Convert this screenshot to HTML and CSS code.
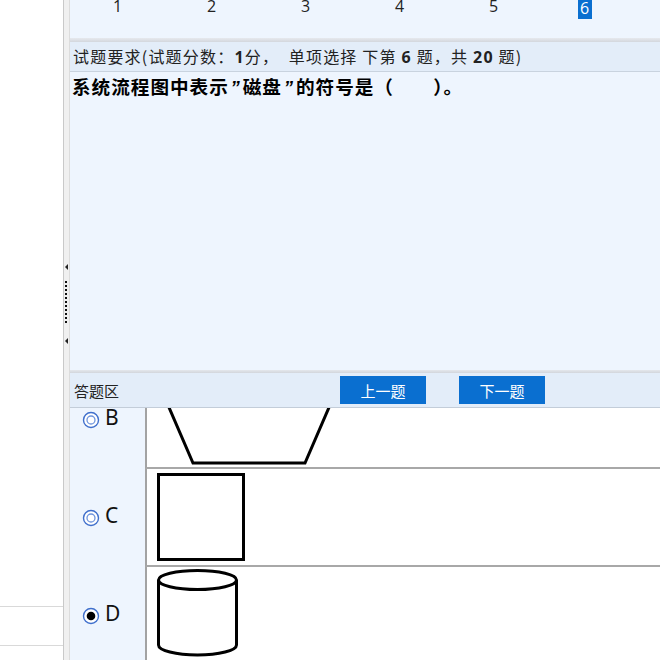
FILE: index.html
```html
<!DOCTYPE html>
<html lang="zh">
<head>
<meta charset="utf-8">
<title>答题</title>
<link rel="stylesheet" href="styles.css">
</head>
<body>
<div class="app">
  <aside class="left">
    <div class="left-fill"></div>
    <div class="left-row"></div>
    <div class="left-row"></div>
  </aside>
  <div class="splitter">
    <svg class="grip" width="6" height="84" viewBox="0 0 6 84">
      <path d="M1 4 L4 1 L4 7 Z" fill="#222"/>
      <g fill="#111">
        <rect x="1" y="18" width="2" height="2"/><rect x="1" y="22" width="2" height="2"/>
        <rect x="1" y="26" width="2" height="2"/><rect x="1" y="30" width="2" height="2"/>
        <rect x="1" y="34" width="2" height="2"/><rect x="1" y="38" width="2" height="2"/>
        <rect x="1" y="42" width="2" height="2"/><rect x="1" y="46" width="2" height="2"/>
        <rect x="1" y="50" width="2" height="2"/><rect x="1" y="54" width="2" height="2"/>
        <rect x="1" y="58" width="2" height="2"/>
      </g>
      <path d="M1 78 L4 75 L4 81 Z" fill="#222"/>
    </svg>
  </div>
  <main class="main">
    <div class="nums">
      <span class="num">1</span>
      <span class="num">2</span>
      <span class="num">3</span>
      <span class="num">4</span>
      <span class="num">5</span>
      <span class="num"><span class="num-active">6</span></span>
    </div>
    <div class="hsep"></div>
    <div class="req">试题要求(试题分数：<b>1</b>分，&nbsp;&nbsp;单项选择 下第 <b>6</b> 题，共 <b>20</b> 题)</div>
    <div class="question">系统流程图中表示<span class="q">”</span>磁盘<span class="q">”</span>的符号是（　　）。</div>
    <div class="hsep2"></div>
    <div class="answer-bar">
      <span class="bar-label">答题区</span>
      <button class="btn">上一题</button>
      <button class="btn">下一题</button>
    </div>
    <div class="options">
      <div class="opt opt-first">
        <div class="opt-key">
          <svg class="radio" width="18" height="18" viewBox="0 0 18 18"><circle cx="9" cy="9" r="7.5" fill="#fff" stroke="#3f6fcc" stroke-width="1.4"/><circle cx="9" cy="9" r="4" fill="none" stroke="#6f95dd" stroke-width="1.3"/></svg>
          <span class="letter">B</span>
        </div>
        <div class="opt-cell">
          <svg width="200" height="96" viewBox="0 0 200 96"><path d="M8 4 L46 92 L158 92 L196 4" fill="none" stroke="#000" stroke-width="3" stroke-linejoin="miter"/></svg>
        </div>
      </div>
      <div class="opt">
        <div class="opt-key">
          <svg class="radio" width="18" height="18" viewBox="0 0 18 18"><circle cx="9" cy="9" r="7.5" fill="#fff" stroke="#3f6fcc" stroke-width="1.4"/><circle cx="9" cy="9" r="4" fill="none" stroke="#6f95dd" stroke-width="1.3"/></svg>
          <span class="letter">C</span>
        </div>
        <div class="opt-cell">
          <svg width="100" height="96" viewBox="0 0 100 96"><rect x="11.5" y="5.5" width="85" height="85" fill="#fff" stroke="#000" stroke-width="3"/></svg>
        </div>
      </div>
      <div class="opt">
        <div class="opt-key">
          <svg class="radio" width="18" height="18" viewBox="0 0 18 18"><circle cx="9" cy="9" r="7.5" fill="#fff" stroke="#3f6fcc" stroke-width="1.4"/><circle cx="9" cy="9" r="4.3" fill="#000"/></svg>
          <span class="letter">D</span>
        </div>
        <div class="opt-cell">
          <svg width="100" height="96" viewBox="0 0 100 96"><path d="M11.5 13 L11.5 78 A39 10 0 0 0 89.5 78 L89.5 13" fill="#fff" stroke="#000" stroke-width="3"/><ellipse cx="50.5" cy="13" rx="39" ry="9.5" fill="#fff" stroke="#000" stroke-width="3"/></svg>
        </div>
      </div>
    </div>
  </main>
</div>
</body>
</html>
```

FILE: styles.css
```css
* { box-sizing: border-box; }
html, body { margin: 0; padding: 0; }
body {
  width: 660px;
  height: 660px;
  overflow: hidden;
  font-family: "Noto Sans CJK SC", "Noto Sans", sans-serif;
  background: #fff;
}
.app {
  display: flex;
  height: 660px;
}
.left {
  width: 63px;
  flex: none;
  display: flex;
  flex-direction: column;
  background: #fff;
  overflow: hidden;
}
.left-fill { height: 606px; flex: none; }
.left-row {
  height: 39px;
  flex: none;
  border-top: 1px solid #d9d9d9;
}
.splitter {
  width: 7px;
  flex: none;
  background: #f0f0f0;
  border-left: 1px solid #c9c9c9;
  border-right: 1px solid #dcdcdc;
  padding-top: 263px;
}
.grip { display: block; }
.main {
  flex: 1;
  display: flex;
  flex-direction: column;
  background: #eef5fe;
  min-width: 0;
}
.nums {
  height: 38px;
  display: grid;
  grid-template-columns: repeat(6, 94px);
  align-items: start;
  font-family: "Open Sans", "Noto Sans", sans-serif;
  font-size: 16px;
  color: #222;
}
.num {
  text-align: center;
  line-height: 19px;
  margin-top: -3px;
  padding-left: 1px;
}
.num-active {
  display: inline-block;
  background: #0a6fd0;
  color: #fff;
  padding: 0 3px 0 2px;
  line-height: 22px;
  margin-left: -5px;
}
.hsep {
  height: 4px;
  background: linear-gradient(#e6e9ee, #d3d7dd);
}
.req {
  height: 30px;
  background: #e3edf9;
  border-bottom: 1px solid #c9d3df;
  font-size: 16px;
  letter-spacing: 1.2px;
  color: #222;
  line-height: 29px;
  padding-left: 3px;
  white-space: nowrap;
}
.req b { font-weight: 700; font-family: "Open Sans", "Noto Sans CJK SC", sans-serif; }
.question {
  height: 298px;
  font-size: 18.6px;
  font-weight: 700;
  color: #000;
  padding-left: 2px;
  line-height: 28px;
  letter-spacing: 1px;
  white-space: nowrap;
}
.q {
  font-family: "Liberation Sans", sans-serif;
  font-style: italic;
  display: inline-block;
  width: 14px;
  text-align: center;
}
.hsep2 {
  height: 3px;
  background: linear-gradient(#e4e7ec, #d2d6dc);
}
.answer-bar {
  height: 35px;
  background: #e3edf9;
  border-bottom: 1px solid #c3cdd9;
  display: flex;
  align-items: center;
  padding-left: 4px;
}
.bar-label {
  width: 266px;
  font-size: 15px;
  color: #222;
}
.btn {
  width: 86px;
  height: 28px;
  margin-right: 33px;
  border: none;
  background: #0a6fd0;
  color: #fff;
  font-family: "Noto Sans CJK SC", sans-serif;
  font-size: 15px;
  padding: 0;
}
.options {
  flex: 1;
  overflow: hidden;
  background: #fff;
}
.opt {
  display: flex;
  height: 98px;
}
.opt-first { margin-top: -37px; }
.opt-key {
  width: 75px;
  flex: none;
  background: #eef5fe;
  display: flex;
  align-items: center;
  padding-left: 12px;
  gap: 5px;
}
.radio { display: block; }
.letter {
  font-family: "Noto Sans", sans-serif;
  font-size: 21px;
  color: #111;
  line-height: 1;
  margin-top: -6px;
}
.opt-cell {
  flex: 1;
  background: #fff;
  border-left: 2px solid #a3a3a3;
  border-bottom: 2px solid #a8a8a8;
}
.opt-cell svg { display: block; }
```
